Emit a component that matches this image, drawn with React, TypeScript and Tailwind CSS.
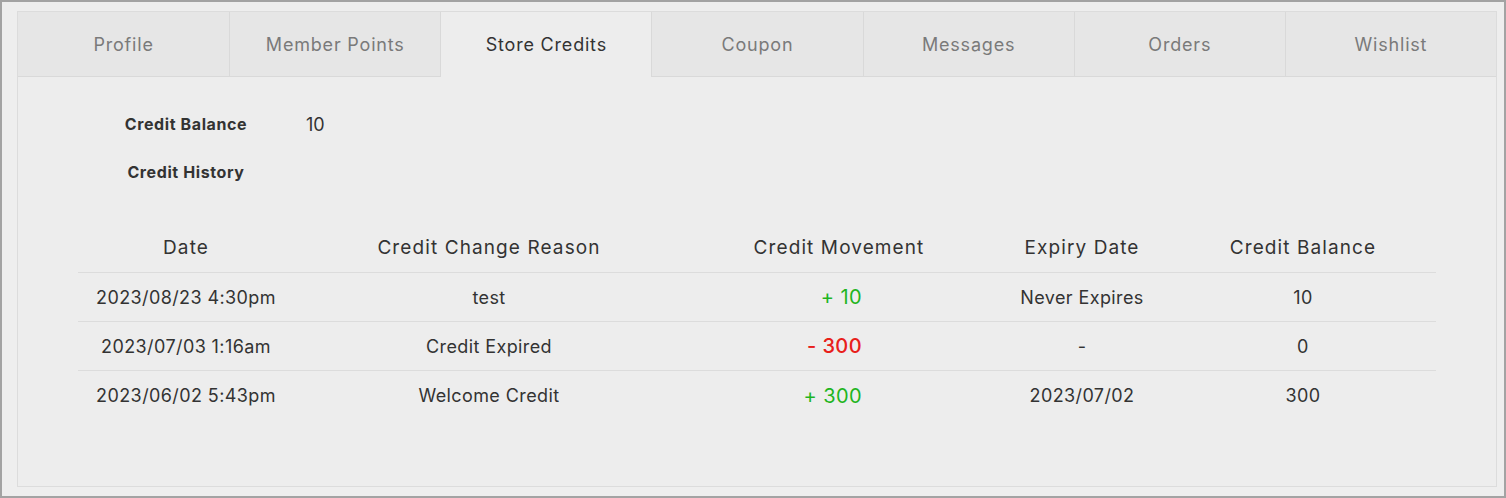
import React from 'react';

const tabs = ['Profile', 'Member Points', 'Store Credits', 'Coupon', 'Messages', 'Orders', 'Wishlist'];

const rows = [
  { date: '2023/08/23 4:30pm', reason: 'test', move: '+ 10', up: true, expiry: 'Never Expires', balance: '10' },
  { date: '2023/07/03 1:16am', reason: 'Credit Expired', move: '- 300', up: false, expiry: '-', balance: '0' },
  { date: '2023/06/02 5:43pm', reason: 'Welcome Credit', move: '+ 300', up: true, expiry: '2023/07/02', balance: '300' },
];

const cols = 'grid grid-cols-[216px_390px_310px_176px_1fr]';

export default function App() {
  return (
    <div
      className="w-[1506px] h-[498px] border-2 border-[#a3a3a3] bg-[#eeeeee] pt-[9px] pb-[9px] pl-[15px] pr-[7px] text-[#333]"
      style={{ fontFamily: 'Inter, "Open Sans", sans-serif' }}
    >
      <div className="h-full border border-[#dcdcdc] bg-[#ededed]">
        {/* tabs */}
        <div className="grid grid-cols-7 h-[65px]">
          {tabs.map((t, i) => {
            const active = t === 'Store Credits';
            return (
              <div
                key={t}
                className={
                  'flex items-center justify-center text-[18px] tracking-[0.8px] ' +
                  (i > 0 ? 'border-l border-[#d9d9d9] ' : '') +
                  (active ? 'bg-[#ededed] text-[#333]' : 'bg-[#e6e6e6] text-[#7a7a7a] border-b border-b-[#d9d9d9]')
                }
              >
                {t}
              </div>
            );
          })}
        </div>

        <div className="px-[60px] pt-[23px]">
          <div className="grid grid-cols-[216px_1fr]">
            <div className="h-12 flex items-center justify-center text-[16px] font-bold tracking-[0.6px]">Credit Balance</div>
            <div className="h-12 flex items-center pl-3 text-[18px]">10</div>
            <div className="h-12 flex items-center justify-center text-[16px] font-bold tracking-[0.6px]">Credit History</div>
            <div className="h-12" />
          </div>

          <div className="mt-[26px]">
            <div className={cols + ' h-[51px] border-b border-[#dcdcdc] text-[19px] tracking-[1.1px] pt-[2px]'}>
              <div className="flex items-center justify-center">Date</div>
              <div className="flex items-center justify-center">Credit Change Reason</div>
              <div className="flex items-center justify-center">Credit Movement</div>
              <div className="flex items-center justify-center">Expiry Date</div>
              <div className="flex items-center justify-center">Credit Balance</div>
            </div>
            {rows.map((r, i) => (
              <div
                key={r.date}
                className={cols + ' h-[49px] text-[18px] tracking-[0.4px] ' + (i < rows.length - 1 ? 'border-b border-[#dcdcdc]' : '')}
              >
                <div className="flex items-center justify-center">{r.date}</div>
                <div className="flex items-center justify-center">{r.reason}</div>
                <div
                  className={
                    'flex items-center justify-end pr-[132px] text-[20px] ' +
                    (r.up ? 'text-[#1fb51f]' : 'text-[#e8201a] font-medium')
                  }
                >
                  {r.move}
                </div>
                <div className="flex items-center justify-center">{r.expiry}</div>
                <div className="flex items-center justify-center">{r.balance}</div>
              </div>
            ))}
          </div>
        </div>
      </div>
    </div>
  );
}
